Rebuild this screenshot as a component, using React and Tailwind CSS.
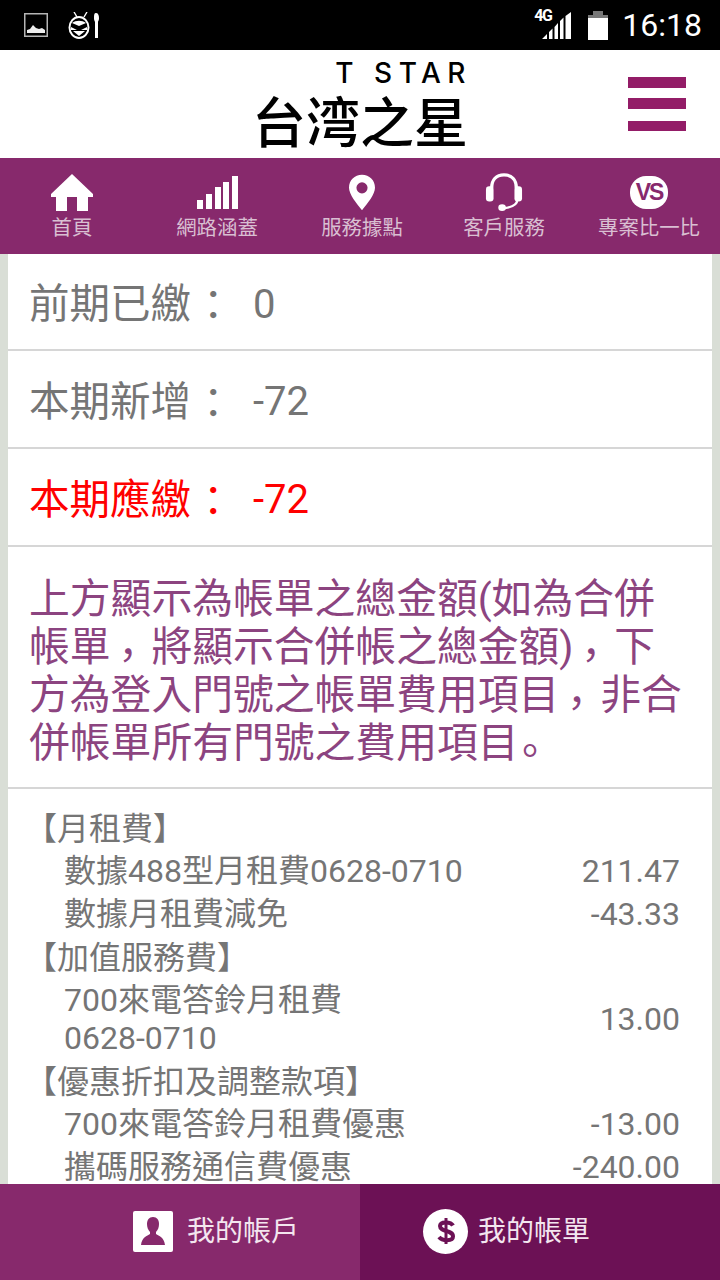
const FONT = 'font-["Roboto","Noto_Sans_CJK_TC",sans-serif]';

function Picture() {
  return (
    <svg width="24" height="24" viewBox="0 0 24 24">
      <rect x="0.75" y="0.75" width="22.5" height="22.5" fill="#000" stroke="#b5b5b5" strokeWidth="1.5" />
      <path d="M3 20v-3l3-1 3-4 3 3 3 1 3-1 3 2v3z" fill="#eee" />
    </svg>
  );
}

function Gremlin() {
  return (
    <svg width="32" height="27" viewBox="0 0 32 27" fill="none">
      <path d="M6 0l3 5M19 0l-3 5" stroke="#fff" strokeWidth="1.4" />
      <ellipse cx="11" cy="15.5" rx="9.5" ry="10.5" stroke="#fff" strokeWidth="2" />
      <path d="M4 11c4-3 10-3 14 0l-7 3z" fill="#fff" />
      <path d="M3 15l6 3H3zM19 15l-6 3h6z" fill="#fff" />
      <path d="M5 19h12l-6 5z" fill="#fff" />
      <path d="M28 1c2 0 3 2 3 5s-1 3-1 4v16h-3V10c0-1-1-1-1-4s0-5 2-5z" fill="#fff" />
    </svg>
  );
}

function Signal() {
  return (
    <svg width="29" height="27" viewBox="0 0 29 27">
      <path d="M0 27 5 22v5zM7 27v-7l3.5-3.5V27zM12.500 27V15l3.500-4V27zM18 27V9l3.500-3.500V27zM23.500 27V4L29 0v27z" fill="#fff" />
    </svg>
  );
}

function Battery() {
  return (
    <svg width="20" height="29" viewBox="0 0 20 29">
      <rect x="5" y="0" width="10" height="4" fill="#777" />
      <rect x="0" y="4" width="20" height="3" fill="#777" />
      <rect x="0" y="7" width="20" height="22" fill="#fff" />
    </svg>
  );
}

function HomeIcon() {
  return (
    <svg width="42" height="37" viewBox="0 0 42 37" fill="#fff">
      <path d="M21 0 42 20v3h-5v14H26V23H16v14H5V23H0v-3z" />
    </svg>
  );
}

function BarsIcon() {
  return (
    <svg width="41" height="33" viewBox="0 0 41 33" fill="#fff">
      <rect x="0" y="24" width="6" height="9" />
      <rect x="9" y="18" width="6" height="15" />
      <rect x="18" y="11" width="6" height="22" />
      <rect x="26" y="6" width="6" height="27" />
      <rect x="35" y="0" width="6" height="33" />
    </svg>
  );
}

function PinIcon() {
  return (
    <svg width="26" height="37" viewBox="0 0 28 38" fill="#fff">
      <path fillRule="evenodd" d="M14 0c8 0 14 6 14 14 0 7-8 17-14 24C8 31 0 21 0 14 0 6 6 0 14 0zm0 8a6 6 0 1 0 0 12 6 6 0 0 0 0-12z" />
    </svg>
  );
}

function HeadsetIcon() {
  return (
    <svg width="38" height="38" viewBox="0 0 38 40" fill="none">
      <path d="M6 16C6 7 11 2 19 2s13 5 13 14" stroke="#fff" strokeWidth="3.5" />
      <rect x="0" y="14" width="8" height="16" rx="3.5" fill="#fff" />
      <rect x="30" y="14" width="8" height="16" rx="3.5" fill="#fff" />
      <path d="M33 28c0 6-6 8-13 9" stroke="#fff" strokeWidth="2.5" />
      <ellipse cx="17" cy="36.500" rx="4" ry="3.500" fill="#fff" />
    </svg>
  );
}

function VsIcon() {
  return (
    <div className="flex h-[33px] w-[38px] items-center justify-center rounded-[16px] bg-white">
      <span className='font-["Liberation_Sans",sans-serif] text-[23px] font-bold leading-none tracking-[-2px] text-[#87296c]'>VS</span>
    </div>
  );
}

function NavItem({ icon, label, width }) {
  return (
    <div className={`flex flex-col items-center ${width}`}>
      <div className="flex h-[40px] items-center justify-center">{icon}</div>
      <span className="mt-[3px] whitespace-nowrap text-[20.400px] leading-[26px] text-[#d9bfd2]">{label}</span>
    </div>
  );
}

function SummaryRow({ label, value, red, height }) {
  return (
    <div className={`flex items-center border-b-2 border-[#d6d6d6] pl-[21px] pt-[6px] ${height} ${red ? "text-[#ff0000]" : "text-[#757575]"}`}>
      <span className="w-[224px] shrink-0 text-[40.500px]">
        {label}
        <span className="inline-block translate-x-[2px] translate-y-[2px]">：</span>
      </span>
      <span className="text-[40px]">{value}</span>
    </div>
  );
}

function Head({ children }) {
  return <div className="-ml-[11px] h-[43px] text-[32px] leading-[43px]">{children}</div>;
}

function Line({ label, amount }) {
  return (
    <div className="flex items-center justify-between pl-[28px] text-[32px] leading-[38px]">
      <span className="min-h-[43px] w-[410px] pb-[4.500px] pt-[0.500px]">{label}</span>
      <span className="pb-[4px] text-[32px]">{amount}</span>
    </div>
  );
}

function Comma() {
  return <span className="inline-block translate-x-[-3px] translate-y-[9px] leading-[20px]">，</span>;
}

export default function App() {
  return (
    <div className={`flex h-[1280px] w-[720px] flex-col overflow-hidden bg-[#d9ded6] ${FONT}`}>
      <div className="flex h-[50px] shrink-0 items-center justify-between bg-black pl-[24px] pr-[18px]">
        <div className="flex items-center gap-[20px]">
          <Picture />
          <Gremlin />
        </div>
        <div className="flex items-center">
          <div className="relative mr-[17px] mt-[1px]">
            <span className="absolute -left-[8px] -top-[4px] text-[16px] font-bold leading-none tracking-[-1.500px] text-white">4G</span>
            <Signal />
          </div>
          <div className="mr-[14px]"><Battery /></div>
          <span className="text-[32px] leading-none text-white">16:18</span>
        </div>
      </div>

      <div className="relative flex h-[108px] shrink-0 items-center justify-center bg-white pt-[4px]">
        <div className="flex flex-col items-end text-black">
          <span className="-mr-[4px] text-[28px] font-medium leading-[26px] tracking-[6.500px] [font-family:Inter]">T STAR</span>
          <span className="mt-[11px] text-[54px] font-medium leading-[56px]">台湾之星</span>
        </div>
        <div className="absolute right-[34px] top-[27px] flex flex-col">
          <div className="h-[11px] w-[58px] bg-[#931c67]" />
          <div className="mt-[10px] h-[11px] w-[58px] bg-[#931c67]" />
          <div className="mt-[12px] h-[10px] w-[58px] bg-[#931c67]" />
        </div>
      </div>

      <div className="flex h-[96px] shrink-0 items-start bg-[#87296c] pt-[14px]">
        <NavItem width="w-[144px]" icon={<HomeIcon />} label="首頁" />
        <NavItem width="w-[146px]" icon={<BarsIcon />} label="網路涵蓋" />
        <NavItem width="w-[144px]" icon={<PinIcon />} label="服務據點" />
        <NavItem width="w-[140px]" icon={<HeadsetIcon />} label="客戶服務" />
        <NavItem width="w-[146px] pl-[4px]" icon={<VsIcon />} label="專案比一比" />
      </div>

      <div className="mx-[8px] min-h-0 flex-1 overflow-hidden bg-white">
        <SummaryRow height="h-[97px]" label="前期已繳" value="0" />
        <SummaryRow height="h-[98px]" label="本期新增" value="-72" />
        <SummaryRow height="h-[98px]" label="本期應繳" value="-72" red />
        <div className="h-[242px] border-b-2 border-[#d6d6d6] pl-[21px] pr-[22px] pt-[28px] text-[40.800px] leading-[48px] text-[#8c4480]">
          上方顯示為帳單之總金額(如為合併帳單<Comma />將顯示合併帳之總金額)<Comma />下方為登入門號之帳單費用項目<Comma />非合併帳單所有門號之費用項目<span className="inline-block translate-x-[-9px] translate-y-[9px] leading-[20px]">。</span>
        </div>
        <div className="pl-[28px] pr-[32px] pt-[19px] text-[#757575]">
          <Head>【月租費】</Head>
          <Line label="數據488型月租費0628-0710" amount="211.47" />
          <Line label="數據月租費減免" amount="-43.33" />
          <Head>【加值服務費】</Head>
          <Line label={<>700來電答鈴月租費<br />0628-0710</>} amount="13.00" />
          <Head>【優惠折扣及調整款項】</Head>
          <Line label="700來電答鈴月租費優惠" amount="-13.00" />
          <Line label="攜碼服務通信費優惠" amount="-240.00" />
        </div>
      </div>

      <div className="flex h-[96px] shrink-0 text-[#f3e6ef]">
        <div className="flex w-1/2 items-center gap-[14px] bg-[#87296c] pb-[2px] pl-[133px]">
          <div className="flex h-[41px] w-[40px] items-center justify-center rounded-[2px] bg-white">
            <svg width="26" height="30" viewBox="0 0 26 30" fill="#87296c">
              <path d="M13 1c4 0 6 3 6 7 0 3-1 6-3 8v2c3 2 8 3 9 11H1c1-8 6-9 9-11v-2C8 14 7 11 7 8c0-4 2-7 6-7z" />
            </svg>
          </div>
          <span className="mt-[2px] text-[28px] leading-none">我的帳戶</span>
        </div>
        <div className="flex w-1/2 items-center gap-[10px] bg-[#6c1155] pb-[2px] pl-[63px]">
          <div className="flex h-[45px] w-[45px] items-center justify-center rounded-full bg-white">
            <svg width="20" height="32" viewBox="0 0 20 32" fill="none" stroke="#6c1155">
              <path d="M17 10.500C15 6.500 4 6 4 11c0 6.500 13 3.500 13 10.500 0 5-11 4.500-14 .5" strokeWidth="4" />
              <path d="M10 3v26" strokeWidth="3" />
            </svg>
          </div>
          <span className="mt-[2px] text-[28px] leading-none">我的帳單</span>
        </div>
      </div>
    </div>
  );
}
